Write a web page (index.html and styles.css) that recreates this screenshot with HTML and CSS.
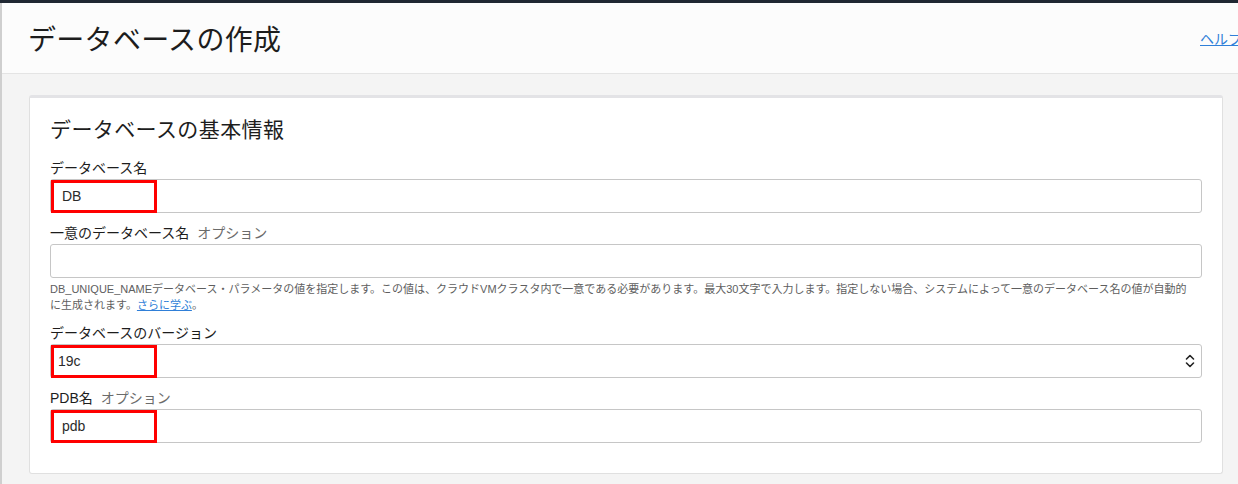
FILE: index.html
```html
<!DOCTYPE html>
<html lang="ja">
<head>
<meta charset="utf-8">
<title>データベースの作成</title>
<link rel="stylesheet" href="styles.css">
</head>
<body>
<div class="page">
  <header class="head">
    <h1 class="title">データベースの作成</h1>
    <a class="help" href="#">ヘルプ</a>
  </header>
  <main class="content">
    <section class="card">
      <h2 class="card-title">データベースの基本情報</h2>

      <div class="field">
        <label class="label">データベース名</label>
        <div class="control">
          <input class="input" type="text" value="DB">
          <span class="mark"></span>
        </div>
      </div>

      <div class="field">
        <label class="label">一意のデータベース名<span class="opt">オプション</span></label>
        <div class="control">
          <input class="input" type="text" value="">
        </div>
        <p class="hint">DB_UNIQUE_NAMEデータベース・パラメータの値を指定します。この値は、クラウドVMクラスタ内で一意である必要があります。最大30文字で入力します。指定しない場合、システムによって一意のデータベース名の値が自動的に生成されます。<a class="hint-link" href="#">さらに学ぶ</a>。</p>
      </div>

      <div class="field">
        <label class="label">データベースのバージョン</label>
        <div class="control">
          <select class="input select"><option>19c</option></select>
          <svg class="chev" width="10" height="16" viewBox="0 0 10 16" aria-hidden="true">
            <path d="M1.5 6 L5 2.5 L8.5 6" fill="none" stroke="#222" stroke-width="1.6" stroke-linecap="round" stroke-linejoin="round"/>
            <path d="M1.5 10 L5 13.5 L8.5 10" fill="none" stroke="#222" stroke-width="1.6" stroke-linecap="round" stroke-linejoin="round"/>
          </svg>
          <span class="mark"></span>
        </div>
      </div>

      <div class="field">
        <label class="label">PDB名<span class="opt">オプション</span></label>
        <div class="control">
          <input class="input" type="text" value="pdb">
          <span class="mark"></span>
        </div>
      </div>
    </section>
  </main>
</div>
</body>
</html>
```

FILE: styles.css
```css
html, body {
  margin: 0;
  padding: 0;
  overflow: hidden;
}
body {
  width: 1238px;
  height: 484px;
  background: #f4f4f4;
  font-family: "Liberation Sans", "Noto Sans CJK JP", sans-serif;
  color: #1d1d1d;
  border-top: 3px solid #1f2732;
  box-sizing: border-box;
}
.page {
  border-left: 2px solid #cfcfcf;
  height: 100%;
  box-sizing: border-box;
}
.head {
  display: flex;
  align-items: center;
  justify-content: space-between;
  height: 70px;
  background: #fcfcfc;
  border-bottom: 1px solid #e4e4e4;
  padding-left: 26px;
  margin-right: -2px;
}
.title {
  margin: 0;
  font-weight: normal;
  font-size: 28px;
  line-height: 34px;
  color: #1d1d1d;
  font-family: "Noto Sans CJK JP", sans-serif;
  letter-spacing: 0.3px;
}
.help {
  font-size: 14px;
  line-height: 20px;
  color: #2f7fd8;
  text-decoration: underline;
  font-family: "Noto Sans CJK JP", sans-serif;
  white-space: nowrap;
  margin-right: -2px;
}
.content {
  padding: 21px 15px 0 27px;
}
.card {
  background: #fff;
  border: 1px solid #e0e0e0;
  border-top: 3px solid #e3e3e6;
  border-radius: 3px;
  padding: 15px 20px 20px 20px;
}
.card-title {
  margin: 0 0 15px 0;
  font-weight: normal;
  font-size: 21px;
  line-height: 30px;
  letter-spacing: 0.4px;
  color: #1d1d1d;
  font-family: "Noto Sans CJK JP", sans-serif;
}
.field {
  margin-bottom: 10px;
}
.label {
  display: block;
  font-size: 14px;
  line-height: 20px;
  margin-bottom: 1px;
  color: #1d1d1d;
}
.opt {
  color: #6b6b6b;
  margin-left: 8px;
}
.control {
  position: relative;
}
.input {
  display: block;
  width: 100%;
  height: 34px;
  box-sizing: border-box;
  border: 1px solid #c6c6c6;
  border-radius: 3px;
  background: #fff;
  font-family: "Liberation Sans", "Noto Sans CJK JP", sans-serif;
  font-size: 14px;
  color: #2b2b2b;
  padding: 0 11px;
  margin: 0;
  outline: none;
}
.select {
  appearance: none;
  -webkit-appearance: none;
  padding: 0 7px;
}
.chev {
  position: absolute;
  right: 7px;
  top: 9px;
  pointer-events: none;
}
.mark {
  position: absolute;
  left: 1px;
  top: 1px;
  width: 106px;
  height: 33px;
  box-sizing: border-box;
  border: 3px solid #ff0000;
  pointer-events: none;
}
.hint {
  margin: 3px 0 0 0;
  padding-right: 8px;
  font-size: 11px;
  line-height: 16px;
  color: #5e5e5e;
}
.hint-link {
  color: #2f7fd8;
  text-decoration: underline;
}
```
